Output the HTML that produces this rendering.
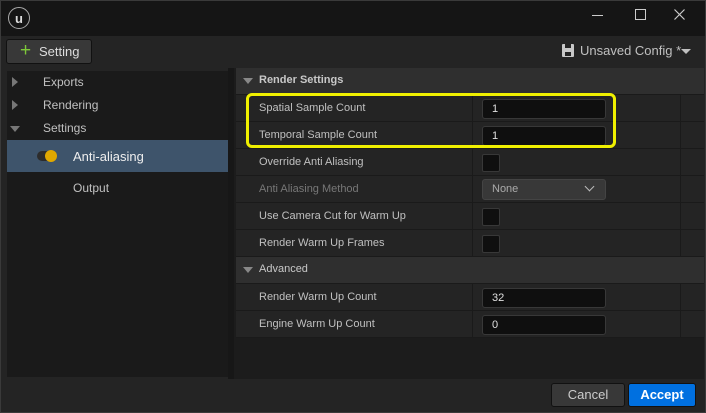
<!DOCTYPE html><html><head><style>
body{margin:0;width:706px;height:413px;background:#242424;font-family:"Liberation Sans",sans-serif;overflow:hidden;position:relative}
.a{position:absolute}
.t{color:#c0c0c0;font-size:12px}
.row{position:absolute;left:236px;width:468px;height:26px;background:#242424;border-bottom:1px solid #1a1a1a}
.row .l{position:absolute;left:23px;top:7px;font-size:11px;color:#c0c0c0}
.row .d{position:absolute;left:236px;top:0;width:1px;height:27px;background:#1a1a1a}
.row .d2{position:absolute;left:444px;top:0;width:1px;height:27px;background:#1a1a1a}
.in{position:absolute;left:246px;top:4px;width:122px;height:18px;background:#0f0f0f;border:1px solid #383838;border-radius:3px;color:#e0e0e0;font-size:11px;line-height:18px;text-indent:9px}
.cb{position:absolute;left:246px;top:5px;width:16px;height:16px;background:#0f0f0f;border:1px solid #383838;border-radius:2px}
.hd{position:absolute;left:236px;width:468px;height:26px;background:#2f2f2f;border-bottom:1px solid #1a1a1a}
.hd .l{position:absolute;left:23px;top:6px;font-size:11px;color:#c8c8c8;font-weight:bold}
.tri{position:absolute;left:7px;top:10px;width:0;height:0;border-left:5px solid transparent;border-right:5px solid transparent;border-top:6px solid #888}
</style></head><body>
<div class="a" style="left:0;top:0;width:706px;height:36px;background:#151515"></div>
<div class="a" style="left:0;top:0;width:704px;height:411px;border:1px solid #3a3a3a"></div>
<div class="a" style="left:8px;top:7px;width:22px;height:22px;border-radius:50%;border:1.5px solid #aaa;color:#ddd;font-size:13px;font-weight:bold;text-align:center;line-height:21px;box-sizing:border-box">u</div>
<div class="a" style="left:592px;top:15px;width:11px;height:1px;background:#ccc"></div>
<div class="a" style="left:635px;top:9px;width:9px;height:9px;border:1px solid #ccc"></div>
<svg class="a" style="left:674px;top:9px" width="11" height="11"><path d="M0.5 0.5L10.5 10.5M10.5 0.5L0.5 10.5" stroke="#ccc" stroke-width="1.2"/></svg>
<div class="a" style="left:6px;top:39px;width:84px;height:23px;background:#383838;border:1px solid #111;border-radius:3px"></div>
<div class="a" style="left:20px;top:42px;color:#7ec83a;font-size:19px;line-height:17px">+</div>
<div class="a t" style="left:39px;top:44px;font-size:13px;color:#ddd">Setting</div>
<div class="a" style="left:562px;top:44px;width:12px;height:13px;background:#c8c8c8;border-radius:1px"></div>
<div class="a" style="left:565px;top:44px;width:6px;height:4px;background:#242424"></div>
<div class="a" style="left:565px;top:52px;width:6px;height:4px;background:#242424"></div>
<div class="a t" style="left:580px;top:43px;font-size:13px;color:#c0c0c0">Unsaved Config *</div>
<div class="a" style="left:681px;top:49px;border-left:5px solid transparent;border-right:5px solid transparent;border-top:5px solid #c0c0c0"></div>
<div class="a" style="left:7px;top:71px;width:221px;height:306px;background:#1a1a1a"></div>
<div class="a" style="left:228px;top:68px;width:6px;height:311px;background:#171717"></div>
<div class="a" style="left:12px;top:77px;border-top:5px solid transparent;border-bottom:5px solid transparent;border-left:6px solid #777"></div>
<div class="a t" style="left:43px;top:75px">Exports</div>
<div class="a" style="left:12px;top:100px;border-top:5px solid transparent;border-bottom:5px solid transparent;border-left:6px solid #777"></div>
<div class="a t" style="left:43px;top:98px">Rendering</div>
<div class="a" style="left:10px;top:126px;border-left:5px solid transparent;border-right:5px solid transparent;border-top:6px solid #777"></div>
<div class="a t" style="left:43px;top:121px">Settings</div>
<div class="a" style="left:7px;top:140px;width:221px;height:32px;background:#3e546b"></div>
<div class="a" style="left:37px;top:151px;width:14px;height:10px;border-radius:5px;background:#2c2c2c"></div>
<div class="a" style="left:45px;top:150px;width:12px;height:12px;border-radius:50%;background:#e0a800"></div>
<div class="a t" style="left:73px;top:149px;color:#eee;font-size:13px">Anti-aliasing</div>
<div class="a t" style="left:73px;top:181px">Output</div>
<div class="a" style="left:234px;top:68px;width:470px;height:311px;background:#1c1c1c"></div>
<div class="hd" style="top:68px"><div class="tri"></div><div class="l">Render Settings</div></div>
<div class="row" style="top:95px"><div class="l">Spatial Sample Count</div><div class="d"></div><div class="d2"></div><div class="in">1</div></div>
<div class="row" style="top:122px"><div class="l">Temporal Sample Count</div><div class="d"></div><div class="d2"></div><div class="in">1</div></div>
<div class="row" style="top:149px"><div class="l">Override Anti Aliasing</div><div class="d"></div><div class="d2"></div><div class="cb"></div></div>
<div class="row" style="top:176px"><div class="l" style="color:#777">Anti Aliasing Method</div><div class="d"></div><div class="d2"></div><div class="in" style="background:#383838;border-color:#444;color:#aaa;top:3px;height:19px">None</div><div class="a" style="left:350px;top:7px;width:6px;height:6px;border-right:1.5px solid #bbb;border-bottom:1.5px solid #bbb;transform:rotate(45deg)"></div></div>
<div class="row" style="top:203px"><div class="l">Use Camera Cut for Warm Up</div><div class="d"></div><div class="d2"></div><div class="cb"></div></div>
<div class="row" style="top:230px"><div class="l">Render Warm Up Frames</div><div class="d"></div><div class="d2"></div><div class="cb"></div></div>
<div class="hd" style="top:257px"><div class="tri"></div><div class="l" style="font-weight:normal">Advanced</div></div>
<div class="row" style="top:284px"><div class="l">Render Warm Up Count</div><div class="d"></div><div class="d2"></div><div class="in">32</div></div>
<div class="row" style="top:311px"><div class="l">Engine Warm Up Count</div><div class="d"></div><div class="d2"></div><div class="in">0</div></div>
<div class="a" style="left:246px;top:93px;width:370px;height:55px;border:3px solid #f0f000;border-radius:6px;box-sizing:border-box"></div>
<div class="a" style="left:551px;top:383px;width:72px;height:22px;background:#383838;border:1px solid #111;border-radius:3px;color:#ccc;font-size:13px;text-align:center;line-height:22px">Cancel</div>
<div class="a" style="left:628px;top:383px;width:66px;height:22px;background:#0070e0;border:1px solid #111;border-radius:3px;color:#fff;font-size:13px;font-weight:bold;text-align:center;line-height:22px">Accept</div>
</body></html>
